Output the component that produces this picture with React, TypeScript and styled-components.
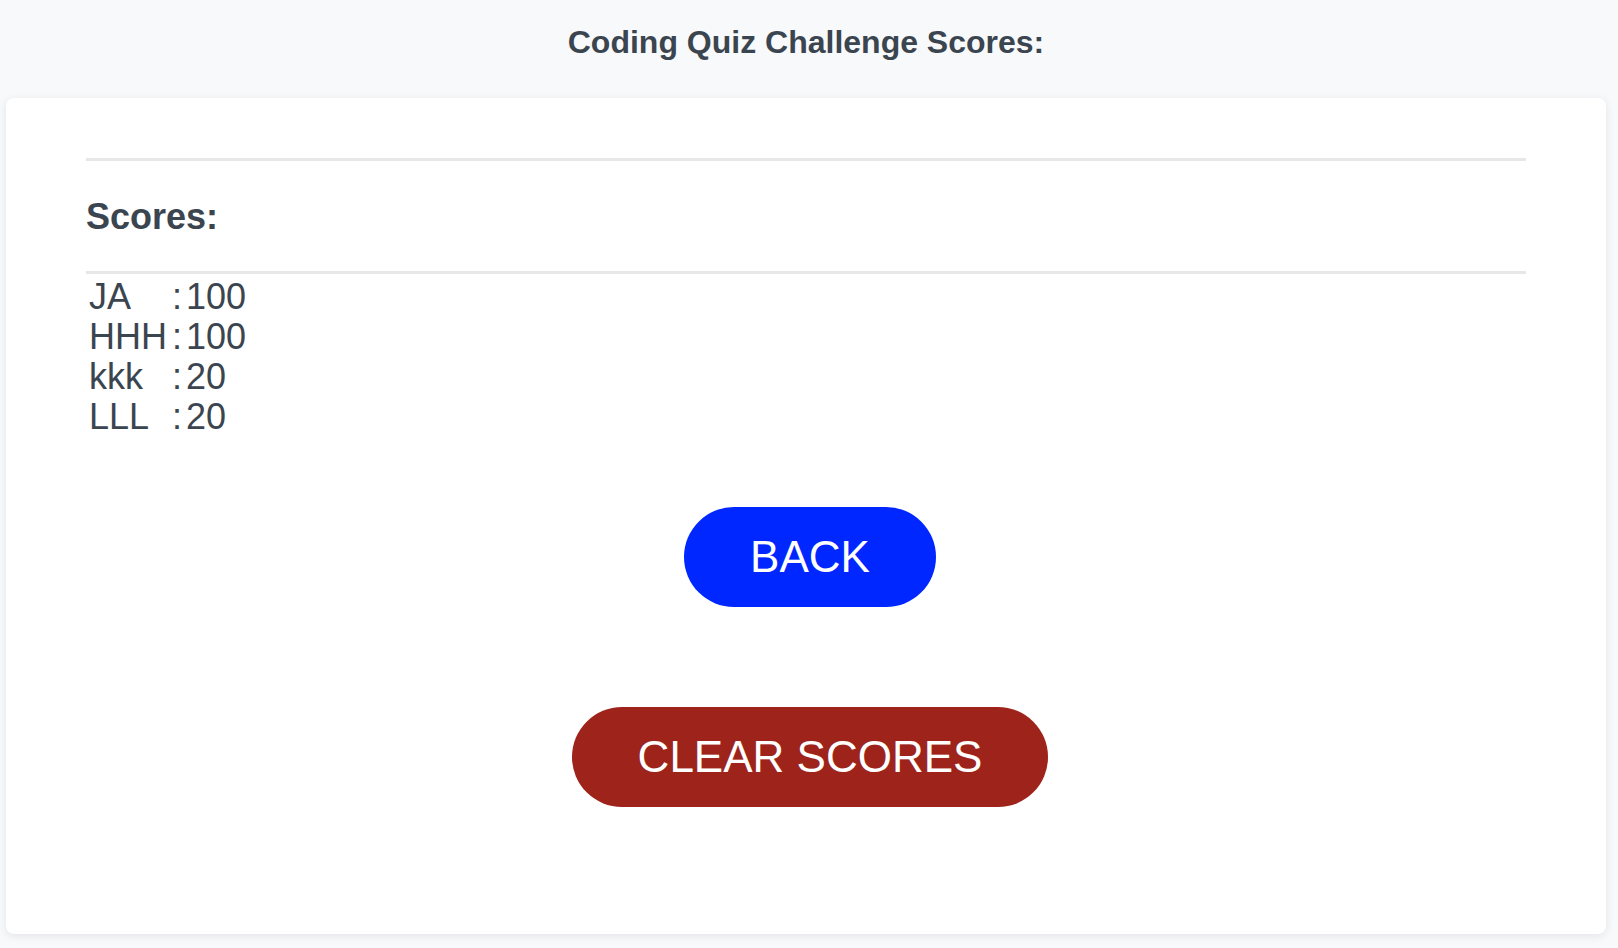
import React from "react";
import styled, { createGlobalStyle } from "styled-components";

const GlobalStyle = createGlobalStyle`
  html, body {
    margin: 0;
    padding: 0;
    background: #f8f9fb;
  }
  body {
    font-family: "Liberation Sans", Helvetica, Arial, sans-serif;
    color: #3b4550;
  }
`;

const Page = styled.div`
  min-height: 948px;
  display: flex;
  flex-direction: column;
`;

const Header = styled.header`
  padding: 24px 6px 37px 0;
  text-align: center;
`;

const Title = styled.h1`
  margin: 0;
  font-size: 32px;
  font-weight: 700;
  line-height: normal;
`;

const Card = styled.main`
  margin: 0 12px 15px 6px;
  padding: 60px 80px 127px;
  background: #ffffff;
  border-radius: 8px;
  box-shadow: 0 2px 8px rgba(40, 50, 70, 0.1);
`;

const Divider = styled.hr`
  margin: 0;
  border: none;
  height: 3px;
  background: #e6e7e8;
`;

const Heading = styled.h2`
  margin: 35px 0 33px;
  font-size: 36px;
  font-weight: 700;
  line-height: normal;
`;

const ScoreList = styled.div`
  display: grid;
  grid-template-columns: max-content max-content;
  column-gap: 5px;
  padding: 3px 0 0 3px;
  font-size: 36px;
  line-height: 40px;
`;

const Colon = styled.span`
  margin-right: 4px;
`;

const Actions = styled.div`
  display: flex;
  flex-direction: column;
  align-items: center;
  gap: 100px;
  margin: 70px 0 0 8px;
`;

const PillButton = styled.button<{ $tone: string }>`
  height: 100px;
  padding: 0 66px;
  border: none;
  border-radius: 50px;
  background: ${(p) => p.$tone};
  color: #ffffff;
  font-family: "Liberation Sans", Helvetica, Arial, sans-serif;
  font-size: 44px;
  cursor: pointer;
`;

const scores = [
  { name: "JA", score: 100 },
  { name: "HHH", score: 100 },
  { name: "kkk", score: 20 },
  { name: "LLL", score: 20 },
];

export default function App() {
  return (
    <Page>
      <GlobalStyle />
      <Header>
        <Title>Coding Quiz Challenge Scores:</Title>
      </Header>
      <Card>
        <Divider />
        <Heading>Scores:</Heading>
        <Divider />
        <ScoreList>
          {scores.map((s) => (
            <React.Fragment key={s.name}>
              <span>{s.name}</span>
              <span>
                <Colon>:</Colon>
                {s.score}
              </span>
            </React.Fragment>
          ))}
        </ScoreList>
        <Actions>
          <PillButton $tone="#0027ff">BACK</PillButton>
          <PillButton $tone="#9e231b">CLEAR SCORES</PillButton>
        </Actions>
      </Card>
    </Page>
  );
}
